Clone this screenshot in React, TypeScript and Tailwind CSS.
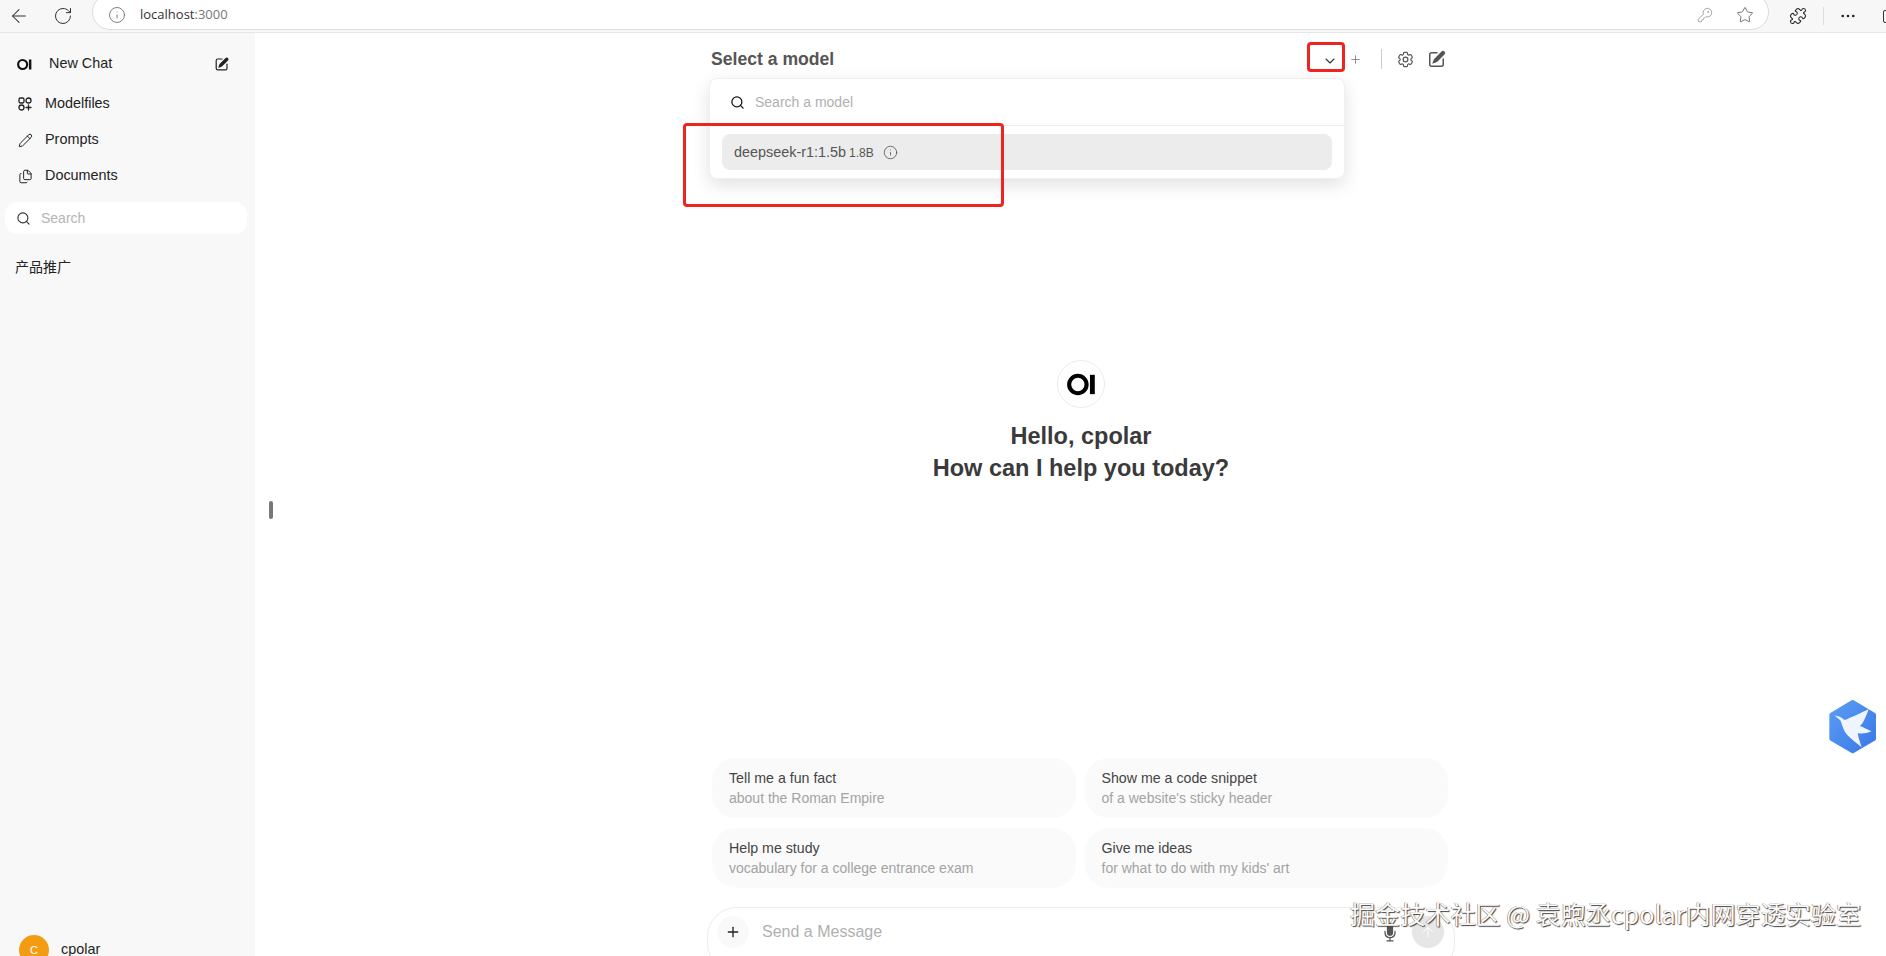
import React from 'react';
import { ArrowLeft, ArrowUp, ChevronDown, Files, Info, KeyRound, MoreHorizontal, Pencil, Plus, Puzzle, RotateCw, Search, Star } from 'lucide-react';
import { HiMicrophone, HiOutlineCog6Tooth } from 'react-icons/hi2';

const PencilSquare = ({ className }: { className: string }) => (
  <svg viewBox="0 0 20 20" fill="currentColor" className={className}>
    <path d="m5.433 13.917 1.262-3.155A4 4 0 0 1 7.58 9.42l6.92-6.918a2.121 2.121 0 0 1 3 3l-6.92 6.918c-.383.383-.84.685-1.343.886l-3.154 1.262a.5.5 0 0 1-.65-.65Z" />
    <path d="M3.5 5.75c0-.69.56-1.25 1.25-1.25H10A.75.75 0 0 0 10 3H4.75A2.75 2.75 0 0 0 2 5.75v9.5A2.75 2.75 0 0 0 4.75 18h9.5A2.75 2.75 0 0 0 17 15.25V10a.75.75 0 0 0-1.5 0v5.25c0 .69-.56 1.25-1.25 1.25h-9.5c-.69 0-1.25-.56-1.25-1.25v-9.5Z" />
  </svg>
);

const ModelfilesIcon = () => (
  <svg viewBox="0 0 14 14" fill="none" stroke="currentColor" strokeWidth="1.3" className="w-[14px] h-[14px]">
    <rect x="1" y="1" width="5" height="5" rx="1.4" />
    <circle cx="10.5" cy="3.5" r="2.5" />
    <circle cx="3.5" cy="10.5" r="2.5" />
    <path d="M10.5 8v5M8 10.5h5" strokeLinecap="round" />
  </svg>
);

const OiLogo = ({ className }: { className: string }) => (
  <svg viewBox="0 0 24 24" className={className}>
    <circle cx="9" cy="12" r="7.2" fill="none" stroke="currentColor" strokeWidth="3.4" />
    <rect x="19" y="4" width="4" height="16" fill="currentColor" />
  </svg>
);

const BirdBadge = () => (
  <svg viewBox="0 0 228 228" className="absolute right-0 top-[690px] w-[76px] h-[76px]">
    <defs>
      <linearGradient id="hexFill" x1="0" y1="0" x2="1" y2="1">
        <stop offset="0" stopColor="#5b9cf5" />
        <stop offset="1" stopColor="#3a78e6" />
      </linearGradient>
    </defs>
    <polygon points="128,36 192,74 192,146 128,184 64,146 64,74" fill="url(#hexFill)" stroke="url(#hexFill)" strokeWidth="12" strokeLinejoin="round" />
    <path d="M72 76C85 78 95 82 104 90C120 85 150 70 176 58C168 80 160 100 150 108C160 112 172 118 184 124C170 130 158 132 143 130C146 145 150 158 155 172C140 160 125 148 112 135C100 122 95 100 92 92C85 86 78 80 72 76Z" fill="#eef5ff" />
  </svg>
);

const suggestions = [
  { title: 'Tell me a fun fact', sub: 'about the Roman Empire' },
  { title: 'Show me a code snippet', sub: "of a website's sticky header" },
  { title: 'Help me study', sub: 'vocabulary for a college entrance exam' },
  { title: 'Give me ideas', sub: "for what to do with my kids' art" },
];

const BrowserBar = () => (
  <div className="h-[33px] shrink-0 flex items-center bg-[#f7f7f7] border-b border-[#e6e6e6] overflow-hidden text-[#333]">
    <ArrowLeft size={22} strokeWidth={1.1} className="ml-[8px] shrink-0" />
    <RotateCw size={20} strokeWidth={1.2} className="ml-[23px] shrink-0" />
    <div className="ml-[19px] -mt-[8px] h-[36px] w-[1677px] shrink-0 rounded-full bg-white border border-[#dcdcdc] flex items-center pt-[6px] pl-[15px] pr-[14px] font-['Open_Sans',sans-serif] text-[13px]">
      <Info size={18} strokeWidth={1.1} className="text-[#666]" />
      <span className="ml-[14px]">localhost<span className="text-[#777]">:3000</span></span>
      <KeyRound size={16} strokeWidth={1.1} className="ml-auto text-[#888]" />
      <Star size={18} strokeWidth={1.1} className="ml-[23px] text-[#555]" />
    </div>
    <Puzzle size={18} strokeWidth={1.4} className="ml-[20px] shrink-0 text-[#222]" />
    <div className="ml-[16px] w-px h-[18px] shrink-0 bg-[#ddd]" />
    <MoreHorizontal size={18} strokeWidth={1.6} className="ml-[15px] shrink-0 text-[#222]" />
    <div className="ml-[26px] w-[8px] h-[13px] shrink-0 border border-[#333] rounded-[2px]" />
  </div>
);

const Sidebar = () => (
  <aside className="w-[255px] shrink-0 bg-[#f8f8f9] flex flex-col text-[14.4px] text-[#222]">
    <div className="flex items-center h-[24px] mt-[19px] pl-[17px] pr-[25px]">
      <OiLogo className="w-[15px] h-[15px] text-[#111]" />
      <span className="ml-[17px]">New Chat</span>
      <PencilSquare className="ml-auto w-[16px] h-[16px] text-[#222]" />
    </div>
    <nav className="mt-[18px] flex flex-col gap-[16px] pl-[18px]">
      <div className="flex items-center gap-[13px] h-[20px]">
        <ModelfilesIcon />
        <span>Modelfiles</span>
      </div>
      <div className="flex items-center gap-[12px] h-[20px]">
        <Pencil size={15} strokeWidth={1.6} />
        <span>Prompts</span>
      </div>
      <div className="flex items-center gap-[12px] h-[20px]">
        <Files size={15} strokeWidth={1.6} />
        <span>Documents</span>
      </div>
    </nav>
    <div className="mt-[16px] ml-[5px] mr-[8px] h-[32px] rounded-xl bg-white flex items-center pl-[11px]">
      <Search size={15} strokeWidth={1.8} className="text-[#333]" />
      <span className="ml-[10px] text-sm text-[#b4b4b4]">Search</span>
    </div>
    <div className="mt-[23px] pl-[15px] text-sm leading-[20px]">产品推广</div>
    <div className="mt-auto -mb-[9px] pl-[19px] flex items-center gap-[12px]">
      <div className="w-[30px] h-[30px] rounded-full bg-[#f39c12] text-white flex items-center justify-center text-[11px]">C</div>
      <span className="font-medium">cpolar</span>
    </div>
  </aside>
);

export default function App() {
  return (
    <div className="relative h-[956px] overflow-hidden bg-white flex flex-col font-['Liberation_Sans','Noto_Sans_CJK_SC',sans-serif]">
      <BrowserBar />
      <div className="flex-1 flex min-h-0">
        <Sidebar />
        <main className="relative flex-1 pl-[21px]">
          <div className="absolute left-[14px] top-[468px] w-[4px] h-[18px] rounded-full bg-[#777]" />
          <div className="relative mx-auto w-[738px]">
            <header className="h-[52px] flex items-center">
              <span className="-ml-px text-[17.6px] font-semibold text-[#555]">Select a model</span>
              <div className="ml-auto flex items-center text-[#555]">
                <ChevronDown size={16} strokeWidth={1.6} className="mt-[4px] text-[#333]" />
                <Plus size={13} strokeWidth={1.5} className="ml-[11px] text-[#777]" />
                <div className="ml-[19px] w-px h-[20px] bg-[#ccc]" />
                <HiOutlineCog6Tooth className="ml-[14px] w-[19px] h-[19px]" />
                <PencilSquare className="ml-[12px] w-[20px] h-[20px] mr-[3px]" />
              </div>
            </header>

            {/* model dropdown */}
            <div className="absolute left-[-3px] top-[45px] w-[636px] h-[101px] bg-white rounded-lg border border-[#f0f0f0] shadow-[0_6px_18px_rgba(0,0,0,0.12)] z-10">
              <div className="h-[47px] flex items-center pl-[20px] border-b border-[#ececec]">
                <Search size={15} strokeWidth={2} className="text-[#111]" />
                <span className="ml-[10px] text-sm text-[#b0b0b0]">Search a model</span>
              </div>
              <div className="mx-[12px] mt-[8px] h-[36px] rounded-lg bg-[#ececec] flex items-center pl-[12px] text-[#555]">
                <span className="text-[14.4px] leading-[20px]">deepseek-r1:1.5b</span>
                <span className="ml-[3px] mt-[1px] text-xs leading-[20px] font-medium">1.8B</span>
                <Info size={15} strokeWidth={1.3} className="ml-[9px]" />
              </div>
            </div>

            {/* annotation boxes */}
            <div className="absolute left-[-29px] top-[90px] w-[321px] h-[84px] rounded-[4px] border-[3px] border-[#f0241f] z-20" />
            <div className="absolute left-[595px] top-[9px] w-[38px] h-[30px] rounded-[4px] border-[3px] border-[#f0241f] z-20" />

            <section className="mt-[275px] flex flex-col items-center text-[23.5px] leading-[32px] font-semibold text-[#3a3a3a]">
              <div className="w-[48px] h-[48px] rounded-full border border-[#ececec] flex items-center justify-center mb-[12px]">
                <OiLogo className="w-[29px] h-[29px] text-black" />
              </div>
              <div>Hello, cpolar</div>
              <div>How can I help you today?</div>
            </section>

            <div className="mt-[274px] mr-[2px] grid grid-cols-2 gap-x-[9px] gap-y-[10px]">
              {suggestions.map((s) => (
                <div key={s.title} className="h-[60px] rounded-3xl bg-[#fafafa] pl-[17px] flex flex-col justify-center leading-[20px]">
                  <div className="text-[14.2px] text-[#444] font-medium">{s.title}</div>
                  <div className="text-sm text-[#a3a3a3]">{s.sub}</div>
                </div>
              ))}
            </div>

            <div className="mt-[19px] -mx-[5px] h-[66px] rounded-[30px] border border-[#ececec] flex items-start pt-[8px] pl-[9px] pr-[10px]">
              <div className="w-[32px] h-[32px] rounded-full bg-[#f9f9f9] flex items-center justify-center">
                <Plus size={16} strokeWidth={2} className="text-[#222]" />
              </div>
              <span className="ml-[13px] mt-[6px] text-base leading-[20px] text-[#b0b0b0]">Send a Message</span>
              <HiMicrophone className="ml-auto mt-[6px] w-[20px] h-[20px] text-[#555]" />
              <div className="ml-[12px] w-[32px] h-[32px] rounded-full bg-[#e6e6e6] flex items-center justify-center">
                <ArrowUp size={16} strokeWidth={1.5} className="text-white" />
              </div>
            </div>
          </div>
        </main>
      </div>

      <BirdBadge />
      <div className="absolute left-[1350px] top-[897px] text-[25.1px] leading-[32px] whitespace-nowrap text-[#fafafa] font-['Noto_Sans_CJK_SC',sans-serif] [text-shadow:1px_1px_1px_#444,-0.5px_0_0.5px_#777] z-30">
        掘金技术社区 @ 袁煦丞cpolar内网穿透实验室
      </div>
    </div>
  );
}
